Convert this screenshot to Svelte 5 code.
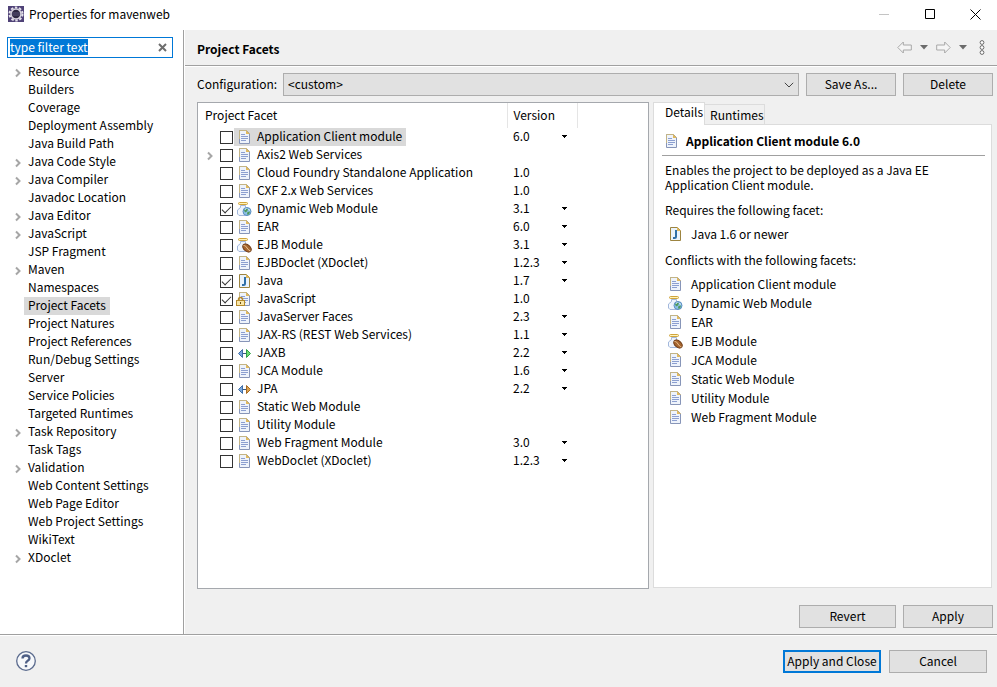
<script lang="ts">
  import { onMount } from 'svelte';

  type Page = { name: string; children?: boolean };
  type Facet = {
    name: string;
    version?: string;
    icon?: string;
    checked?: boolean;
    choices?: boolean;
    children?: boolean;
  };

  const pages: Page[] = [
    { name: 'Resource', children: true },
    { name: 'Builders' },
    { name: 'Coverage' },
    { name: 'Deployment Assembly' },
    { name: 'Java Build Path' },
    { name: 'Java Code Style', children: true },
    { name: 'Java Compiler', children: true },
    { name: 'Javadoc Location' },
    { name: 'Java Editor', children: true },
    { name: 'JavaScript', children: true },
    { name: 'JSP Fragment' },
    { name: 'Maven', children: true },
    { name: 'Namespaces' },
    { name: 'Project Facets' },
    { name: 'Project Natures' },
    { name: 'Project References' },
    { name: 'Run/Debug Settings' },
    { name: 'Server' },
    { name: 'Service Policies' },
    { name: 'Targeted Runtimes' },
    { name: 'Task Repository', children: true },
    { name: 'Task Tags' },
    { name: 'Validation', children: true },
    { name: 'Web Content Settings' },
    { name: 'Web Page Editor' },
    { name: 'Web Project Settings' },
    { name: 'WikiText' },
    { name: 'XDoclet', children: true }
  ];

  let facets = $state<Facet[]>([
    { name: 'Application Client module', version: '6.0', choices: true },
    { name: 'Axis2 Web Services', children: true },
    { name: 'Cloud Foundry Standalone Application', version: '1.0' },
    { name: 'CXF 2.x Web Services', version: '1.0' },
    { name: 'Dynamic Web Module', version: '3.1', icon: 'web', checked: true, choices: true },
    { name: 'EAR', version: '6.0', choices: true },
    { name: 'EJB Module', version: '3.1', icon: 'ejb', choices: true },
    { name: 'EJBDoclet (XDoclet)', version: '1.2.3', choices: true },
    { name: 'Java', version: '1.7', icon: 'java', checked: true, choices: true },
    { name: 'JavaScript', version: '1.0', icon: 'locked', checked: true },
    { name: 'JavaServer Faces', version: '2.3', choices: true },
    { name: 'JAX-RS (REST Web Services)', version: '1.1', choices: true },
    { name: 'JAXB', version: '2.2', icon: 'jaxb', choices: true },
    { name: 'JCA Module', version: '1.6', choices: true },
    { name: 'JPA', version: '2.2', icon: 'jpa', choices: true },
    { name: 'Static Web Module' },
    { name: 'Utility Module' },
    { name: 'Web Fragment Module', version: '3.0', choices: true },
    { name: 'WebDoclet (XDoclet)', version: '1.2.3', choices: true }
  ]);

  const conflicts = [
    { name: 'Application Client module' },
    { name: 'Dynamic Web Module', icon: 'web' },
    { name: 'EAR' },
    { name: 'EJB Module', icon: 'ejb' },
    { name: 'JCA Module' },
    { name: 'Static Web Module' },
    { name: 'Utility Module' },
    { name: 'Web Fragment Module' }
  ];

  let currentPage = $state('Project Facets');
  let currentFacet = $state('Application Client module');
  let filter = $state('type filter text');
  let filterBox: HTMLInputElement;

  onMount(() => {
    filterBox.focus();
    filterBox.select();
  });
</script>

{#snippet twisty()}
  <svg class="twisty" width="8" height="10" viewBox="0 0 8 10" aria-hidden="true">
    <path d="M2 1.5l3.5 3.5L2 8.5" fill="none" stroke="#a6a6a6" stroke-width="2" />
  </svg>
{/snippet}

{#snippet doc()}
  <path d="M3.5 1.5h7l3 3v10h-10z" fill="#eef3fb" stroke="#8795b8" />
  <path d="M3.5 10V1.5h7" fill="none" stroke="#c3b485" />
  <path d="M10 1l4 4h-4z" fill="#e0b95e" />
  <path d="M5 5.5h4M5 7.5h7M5 9.5h7M5 11.5h5" stroke="#8c9fd0" />
{/snippet}

{#snippet jar()}
  <path
    d="M4.5 4.5h5v2l3 2.5v4l-1.5 1.5H3L1.500 13V9l3-2.500z"
    fill="#edf3fc"
    stroke="#a3b8dc"
  />
  <path d="M3 9.500v3" stroke="#fff" />
  <rect x="2.5" y="1.5" width="9" height="2" rx="1" fill="#fff3b8" stroke="#d0a43c" />
{/snippet}

{#snippet facetIcon(kind: string | undefined)}
  <svg class="icon" width="16" height="16" viewBox="0 0 16 16" aria-hidden="true">
    {#if kind === 'web'}
      {@render jar()}
      <circle cx="11" cy="10.5" r="4" fill="#8cc0e8" stroke="#5b8fc0" />
      <path d="M8 9l2.500-1.500 1.500 1-1 2-2 1zM11.500 11l2.500-.5-.5 2-1.500 1.500-1-1z" fill="#4f9a5c" />
      <path d="M9 8.500l1.500-1M12.500 8l1 1.500" stroke="#e7f5ff" />
    {:else if kind === 'ejb'}
      {@render jar()}
      <ellipse cx="11" cy="11" rx="4.800" ry="3.200" transform="rotate(40 11 11)" fill="#a5652f" stroke="#6e3b17" />
      <path d="M7.500 8.500c2 0 2.500 1 3.500 2.500s2 2.500 3.500 3" fill="none" stroke="#edc391" />
    {:else if kind === 'java'}
      <path d="M3.5 1.5h7l3 3v10h-10z" fill="#eaf3fc" stroke="#9c8440" />
      <path d="M10 1l4 4h-4z" fill="#e0b95e" />
      <path d="M9 4v6.500q0 1.500-1.500 1.500H6" fill="none" stroke="#2f6fa7" stroke-width="2" />
    {:else if kind === 'jaxb' || kind === 'jpa'}
      <path d="M6 8.5h5" stroke="#38577f" />
      <path d="M6.5 4.500v8l-4-4z" fill="#7aa8dd" stroke="#3f6da6" />
      <path
        d="M10.5 4.500v8l4-4z"
        fill={kind === 'jaxb' ? '#6fdb74' : '#dba250'}
        stroke={kind === 'jaxb' ? '#2e9f45' : '#a66a22'}
      />
    {:else}
      {@render doc()}
      {#if kind === 'locked'}
        <path d="M2.5 10V8.500q0-2 2-2t2 2V10" fill="none" stroke="#b58a2c" stroke-width="1.500" />
        <rect x=".5" y="9.500" width="8" height="5" fill="#f9e6a8" stroke="#b58a2c" />
        <path d="M4.5 11v2" stroke="#6e5315" />
      {/if}
    {/if}
  </svg>
{/snippet}

<div class="dialog">
  <header class="titlebar">
    <svg width="16" height="16" viewBox="0 0 16 16" aria-hidden="true">
      <rect width="16" height="16" fill="#4f4277" />
      <circle cx="8" cy="8" r="6.500" fill="none" stroke="#e4e1ea" stroke-width="2" stroke-dasharray="2.500 1.600" />
      <circle cx="8" cy="8" r="5" fill="#2d2842" stroke="#d6d3de" stroke-width="1.500" />
      <path d="M4 7h8M4 9h8" stroke="#5a5478" />
    </svg>
    <h1>Properties for mavenweb</h1>
    <div class="window-buttons">
      <button aria-label="Minimize" disabled>
        <svg width="11" height="11" viewBox="0 0 11 11"><path d="M0 5.500h10" stroke="#c4c4c4" /></svg>
      </button>
      <button aria-label="Maximize">
        <svg width="11" height="11" viewBox="0 0 11 11"><path d="M.5.500h9v9h-9z" fill="none" stroke="#000" /></svg>
      </button>
      <button aria-label="Close">
        <svg width="11" height="11" viewBox="0 0 11 11"><path d="M.5.500l10 10M10.500.500l-10 10" stroke="#000" /></svg>
      </button>
    </div>
  </header>

  <div class="body">
    <nav class="sidebar">
      <div class="filter">
        <input type="text" aria-label="Filter" bind:this={filterBox} bind:value={filter} />
        <button aria-label="Clear" onclick={() => (filter = '')}>
          <svg width="9" height="9" viewBox="0 0 9 9"><path d="M1 1l7 7M8 1l-7 7" stroke="#6d6d6d" stroke-width="2" /></svg>
        </button>
      </div>
      <ul class="pages">
        {#each pages as page}
          <li>
            <span class="twisty-slot">
              {#if page.children}{@render twisty()}{/if}
            </span>
            <button class:selected={page.name === currentPage} onclick={() => (currentPage = page.name)}>
              {page.name}
            </button>
          </li>
        {/each}
      </ul>
    </nav>

    <main>
      <div class="page-header">
        <h2>Project Facets</h2>
        <div class="history">
          <button aria-label="Back">
            <svg width="15" height="13" viewBox="0 0 15 13"><path d="M.8 6.500l5.500-5.500v3h8v5h-8v3z" fill="#f5f5f5" stroke="#a8a8a8" /></svg>
          </button>
          <button aria-label="Back history">
            <svg width="8" height="5" viewBox="0 0 8 5"><path d="M0 0h8L4 4.500z" fill="#6b6b6b" /></svg>
          </button>
          <button aria-label="Forward">
            <svg width="15" height="13" viewBox="0 0 15 13"><path d="M14.200 6.500l-5.500-5.500v3h-8v5h8v3z" fill="#f5f5f5" stroke="#a8a8a8" /></svg>
          </button>
          <button aria-label="Forward history">
            <svg width="8" height="5" viewBox="0 0 8 5"><path d="M0 0h8L4 4.500z" fill="#6b6b6b" /></svg>
          </button>
          <button class="menu" aria-label="View menu">
            <svg width="6" height="15" viewBox="0 0 6 15">
              <g fill="#fff" stroke="#6a6a6a">
                <circle cx="3" cy="2.500" r="1.900" />
                <circle cx="3" cy="7.500" r="1.900" />
                <circle cx="3" cy="12.500" r="1.900" />
              </g>
            </svg>
          </button>
        </div>
      </div>

      <div class="content">
        <div class="configuration">
          <label for="configuration">Configuration:</label>
          <div class="combo">
            <select id="configuration">
              <option>&lt;custom&gt;</option>
            </select>
            <svg width="10" height="6" viewBox="0 0 10 6" aria-hidden="true"><path d="M.8.800L5 5 9.200.800" fill="none" stroke="#444" /></svg>
          </div>
          <button class="push">Save As...</button>
          <button class="push">Delete</button>
        </div>

        <div class="panes">
          <div class="facets">
            <table>
              <thead>
                <tr>
                  <th class="name-col">Project Facet</th>
                  <th class="version-col">Version</th>
                  <th></th>
                </tr>
              </thead>
              <tbody>
                {#each facets as facet, i}
                  <tr onclick={() => (currentFacet = facet.name)}>
                    <td>
                      <div class="facet">
                        <span class="twisty-slot">
                          {#if facet.children}{@render twisty()}{/if}
                        </span>
                        <input type="checkbox" id="facet-{i}" bind:checked={facet.checked} />
                        <label for="facet-{i}" class:selected={facet.name === currentFacet}>
                          {@render facetIcon(facet.icon)}
                          {facet.name}
                        </label>
                      </div>
                    </td>
                    <td>
                      <div class="version">
                        {facet.version ?? ''}
                        {#if facet.choices}
                          <button aria-label="Change version of {facet.name}">
                            <svg width="5" height="3" viewBox="0 0 5 3" shape-rendering="crispEdges"><path d="M0 0h5v1H0zM1 1h3v1H1zM2 2h1v1H2z" /></svg>
                          </button>
                        {/if}
                      </div>
                    </td>
                    <td></td>
                  </tr>
                {/each}
              </tbody>
            </table>
          </div>

          <div class="info">
            <div class="tabs" role="tablist">
              <button role="tab" class="active" aria-selected="true">Details</button>
              <button role="tab" aria-selected="false">Runtimes</button>
            </div>
            <section class="details">
              <h3>{@render facetIcon(undefined)}Application Client module 6.0</h3>
              <p>Enables the project to be deployed as a Java EE Application Client module.</p>
              <p>Requires the following facet:</p>
              <ul>
                <li>{@render facetIcon('java')}Java 1.6 or newer</li>
              </ul>
              <p>Conflicts with the following facets:</p>
              <ul>
                {#each conflicts as facet}
                  <li>{@render facetIcon(facet.icon)}{facet.name}</li>
                {/each}
              </ul>
            </section>
          </div>
        </div>

        <div class="page-buttons">
          <button class="push wide">Revert</button>
          <button class="push">Apply</button>
        </div>
      </div>
    </main>
  </div>

  <footer>
    <button class="help" aria-label="Help">
      <svg width="20" height="20" viewBox="0 0 20 20">
        <circle cx="10" cy="10" r="9.300" fill="#f6f8fb" stroke="#5b6b8e" stroke-width="1.300" />
        <path d="M6.500 7.500q0-3 3.500-3t3.500 2.700q0 1.500-1.800 2.500T10 12.500" fill="none" stroke="#4e5f86" stroke-width="2.300" />
        <path d="M8.800 14h2.400v2.200H8.800z" fill="#4e5f86" />
      </svg>
    </button>
    <button class="push wide default">Apply and Close</button>
    <button class="push wide">Cancel</button>
  </footer>
</div>

<style>
  :global(body) {
    margin: 0;
  }

  .dialog {
    display: flex;
    flex-direction: column;
    min-height: 100vh;
    background: #f0f0f0;
    color: #000;
    font: 12px/16px 'Malgun Gothic', 'Noto Sans CJK KR', sans-serif;
    cursor: default;
  }

  .dialog * {
    box-sizing: border-box;
  }

  button,
  input,
  select {
    margin: 0;
    padding: 0;
    border: 0;
    background: none;
    color: inherit;
    font: inherit;
  }

  svg {
    display: block;
    flex: none;
  }

  h1,
  h2,
  h3,
  p,
  ul {
    margin: 0;
    padding: 0;
    font-size: 12px;
    list-style: none;
  }

  .titlebar {
    display: flex;
    align-items: center;
    height: 30px;
    padding: 0 0 2px 8px;
    gap: 5px;
    background: #fff;
  }

  .titlebar h1 {
    flex: 1;
    font-weight: normal;
  }

  .window-buttons {
    display: flex;
  }

  .window-buttons button {
    display: grid;
    place-items: center;
    width: 46px;
    height: 28px;
  }

  .window-buttons button:last-child {
    width: 44px;
  }

  .body {
    display: flex;
    flex: 1;
  }

  .sidebar {
    flex: none;
    width: 184px;
    padding: 7px 10px 8px 7px;
    border-right: 1px solid #a0a0a0;
    background: #fff;
  }

  .filter {
    display: flex;
    align-items: center;
    height: 21px;
    padding: 0 5px 1px 2px;
    border: 1px solid #0078d7;
  }

  .filter input {
    flex: 1;
    min-width: 0;
    height: 16px;
    outline: 0;
  }

  .filter input::selection {
    background: #0078d7;
    color: #fff;
  }

  .pages {
    padding-top: 5px;
  }

  .pages li {
    display: flex;
    height: 18px;
    padding-left: 7px;
  }

  .pages button {
    padding: 0 4px 2px;
    white-space: nowrap;
  }

  .twisty-slot {
    flex: none;
    width: 10px;
    padding-top: 5px;
  }

  .selected {
    background: #d9d9d9;
  }

  main {
    display: flex;
    flex: 1;
    flex-direction: column;
    min-width: 0;
    border-left: 1px solid #fff;
  }

  .page-header {
    display: flex;
    align-items: center;
    justify-content: space-between;
    height: 36px;
    padding: 0 12px;
    border-bottom: 1px solid #a0a0a0;
    box-shadow: 0 1px #fff;
  }

  .page-header h2 {
    padding-top: 2px;
  }

  .history {
    display: flex;
    align-items: center;
    gap: 8px;
  }

  .history .menu {
    margin-left: 4px;
  }

  .content {
    display: flex;
    flex: 1;
    flex-direction: column;
    padding: 7px 4px 6px 12px;
  }

  .configuration {
    display: flex;
    gap: 7px;
    align-items: center;
  }

  .configuration label {
    width: 79px;
    padding-bottom: 1px;
  }

  .combo {
    display: flex;
    flex: 1;
    align-items: center;
    height: 23px;
    padding-right: 4px;
    border: 1px solid #adadad;
    background: #e1e1e1;
  }

  .combo select {
    flex: 1;
    height: 21px;
    padding: 0 0 1px 4px;
    appearance: none;
    outline: 0;
  }

  .push {
    width: 90px;
    height: 23px;
    padding-bottom: 1px;
    border: 1px solid #adadad;
    background: #e1e1e1;
    white-space: nowrap;
  }

  .push.wide {
    width: 98px;
  }

  .page-buttons .push.wide {
    width: 97px;
  }

  .push.default {
    border: 2px solid #0078d7;
  }

  .panes {
    display: grid;
    flex: 1;
    grid-template-columns: 4fr 3fr;
    gap: 4px;
    padding: 6px 1px 16px 0;
  }

  .facets {
    border: 1px solid #a5a8ad;
    background: #fff;
  }

  table {
    width: 100%;
    table-layout: fixed;
    border-collapse: collapse;
  }

  th {
    height: 25px;
    padding: 0 0 1px 6px;
    border-left: 1px solid #e5e5e5;
    font-weight: normal;
    text-align: left;
  }

  th:first-child {
    padding-left: 7px;
    border-left: 0;
  }

  .name-col {
    width: 309px;
  }

  .version-col {
    width: 70px;
  }

  td {
    height: 18px;
    padding: 0;
  }

  .facet {
    display: flex;
    height: 18px;
    padding-left: 8px;
    white-space: nowrap;
  }

  .facet .twisty-slot {
    width: 14px;
  }

  .facet input {
    display: grid;
    flex: none;
    justify-content: center;
    width: 13px;
    height: 13px;
    margin: 3px 1px 0 0;
    border: 1px solid #333;
    appearance: none;
    background: #fff;
  }

  .facet input:checked::after {
    width: 8px;
    height: 4px;
    margin-top: 2px;
    border: solid #333;
    border-width: 0 0 1px 1px;
    content: '';
    transform: rotate(-45deg);
  }

  .facet label {
    display: flex;
    gap: 5px;
    padding: 0 4px 0 2px;
  }

  .facet .icon {
    margin-top: 1px;
  }

  .version {
    display: flex;
    justify-content: space-between;
    height: 18px;
    padding: 0 10px 0 6px;
  }

  .version button {
    display: grid;
    place-items: center;
    height: 16px;
  }

  .info {
    display: flex;
    flex-direction: column;
    padding-bottom: 1px;
  }

  .tabs {
    display: flex;
    align-items: flex-end;
    height: 22px;
  }

  .tabs button {
    height: 20px;
    padding: 0 0 0 5px;
    border: 1px solid #dcdcdc;
    border-width: 1px 1px 0 0;
  }

  .tabs .active {
    z-index: 1;
    height: 23px;
    margin-bottom: -1px;
    padding: 0 1px 4px 11px;
    border-left-width: 1px;
    background: #fff;
  }

  .details {
    flex: 1;
    padding: 8px 6px 8px 8px;
    border: 1px solid #dcdcdc;
    background: #fff;
    line-height: 15px;
  }

  .details h3 {
    display: flex;
    gap: 7px;
    height: 23px;
    padding-left: 1px;
    border-bottom: 1px solid #a0a0a0;
    line-height: 16px;
  }

  .details p {
    max-width: 272px;
    padding: 6px 3px 4px;
  }

  .details ul {
    padding: 3px 5px;
  }

  .details li {
    display: flex;
    gap: 8px;
    align-items: center;
    height: 19px;
  }

  .page-buttons {
    display: flex;
    justify-content: flex-end;
    gap: 7px;
  }

  footer {
    display: flex;
    align-items: center;
    gap: 8px;
    height: 53px;
    padding: 0 10px 0 16px;
    border-top: 1px solid #a0a0a0;
    box-shadow: inset 0 1px #fff;
  }

  .help {
    margin-right: auto;
  }
</style>
